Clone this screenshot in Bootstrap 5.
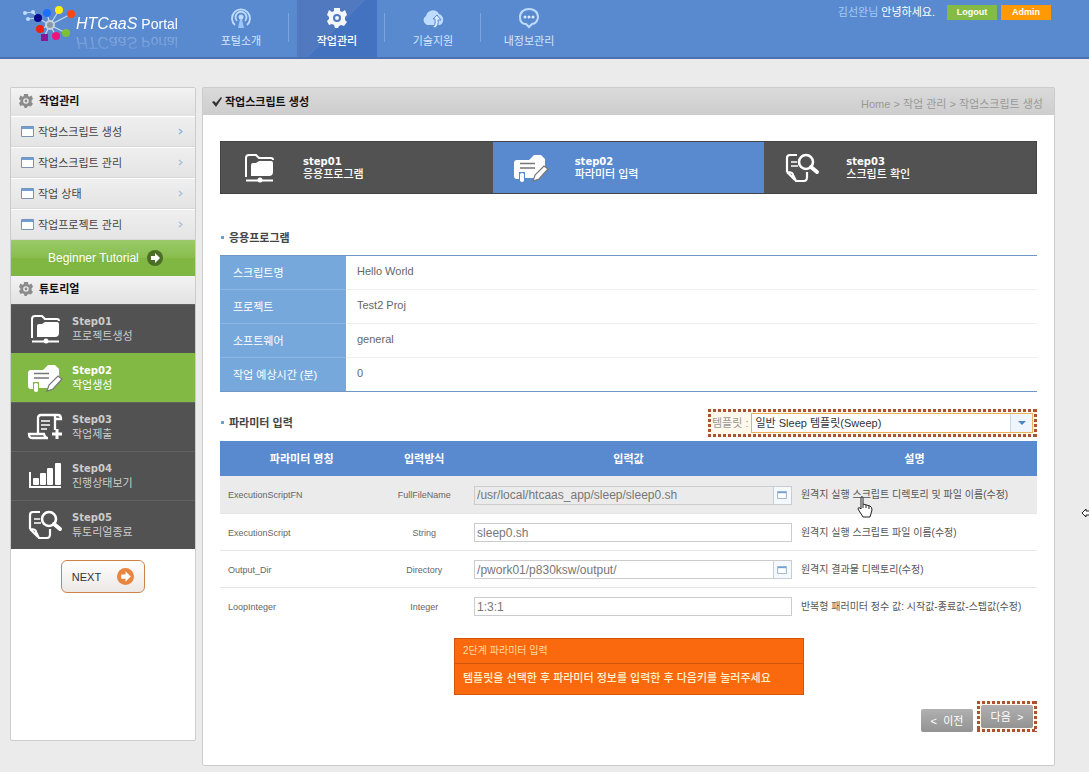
<!DOCTYPE html>
<html lang="ko">
<head>
<meta charset="utf-8">
<meta name="viewport" content="width=device-width, initial-scale=1">
<title>HTCaaS Portal</title>
<link href="https://cdn.jsdelivr.net/npm/bootstrap@5.3.0/dist/css/bootstrap.min.css" rel="stylesheet">
<style>
body{background:#ebebeb;font-family:"Liberation Sans","Noto Sans CJK KR",sans-serif;font-size:11px;line-height:16px;color:#666}
a{text-decoration:none;color:inherit}
.topbar{background:#598acf;border-bottom:2px solid #4a70b0;height:59px}
.brand{width:201px;padding-left:22px;color:#fff}
.brand-text{font-size:14px;line-height:18px;margin-top:15px;-webkit-box-reflect:below 0 linear-gradient(rgba(255,255,255,.1),rgba(255,255,255,.3))}
.brand-text i{font-size:16px;margin-right:4px}
.gnb-link{width:80px;height:57px;padding-top:7px;color:#d3e6fb;line-height:16px}
.gnb-link.active{background:linear-gradient(135deg,#5079c0 50%,#4372c0 50%);color:#fff;font-weight:500}
.gnb-sep{width:1px;height:29px;margin:13px 8px 0 7px;background:#7ba5df}
.user-area{padding:4px 38px 0 0}
.btn-mini{font-size:9px;line-height:15px;font-weight:700;color:#fff;width:50px;padding:0;border:0;border-radius:0}
.bg-leaf{background:#83bb45}
.bg-amber{background:#ff9a05}
.user-name{color:#a4ccf8}
.stage{padding:28px 34px 6px 10px;gap:6px}
.side{width:186px;margin-bottom:25px}
.sheet{background:#fff;border:1px solid #ccc;border-radius:2px}
.side-head{height:28px;padding:0 0 3px 8px;gap:6px;color:#111;font-weight:700;background:linear-gradient(#f3f3f3,#e2e2e2)}
.side-item{height:31px;padding:0 12px 0 10px;gap:4px;color:#444;background:linear-gradient(#efefef,#e4e4e4);border-top:1px solid #fff;border-bottom:1px solid #d9d9d9}
.tutorial{height:36px;padding-left:37px;gap:8px;font-size:12px;color:#fff;background:linear-gradient(#9aca69,#88bd4d 50%,#80b642 50%)}
.side-step{height:49px;padding-left:16px;gap:9px;color:#ccc;background:#525252;border-top:1px solid #616161;line-height:15px}
.side-step.active{background:#81b944;color:#fff;border-color:#81b944}
.step-name{font-family:"DejaVu Sans","Noto Sans CJK KR",sans-serif;font-size:10px;font-weight:700}
.btn-next{width:84px;height:33px;margin:11px auto 0;gap:16px;font-size:11px;color:#333;border:1px solid #cf8248;border-radius:6px;background:linear-gradient(#fff,#ece8e6)}
.title-bar{height:27px;padding:0 11px 0 9px;gap:3px;background:linear-gradient(#dadada,#cdcdcd)}
.title-bar h1{font-size:11px;line-height:16px;font-weight:700;color:#111}
.title-bar .crumbs{color:#999}
.sheet-body{padding:26px 17px 33px}
.wizard{background:#525252;border:1px solid #444;height:53px;color:#fff;margin-bottom:34px}
.wizard-step{flex:1 1 0;padding-left:20px;gap:20px;line-height:13px;font-weight:500}
.wizard-step.active{background:#598acf}
.step-icon{width:36px;height:30px}
.wizard .step-icon{margin-right:6px}
.sub-title{font-size:11px;line-height:20px;font-weight:700;color:#444}
.sub-title::before{content:"";display:inline-block;width:3px;height:3px;margin:0 5px 3px 1px;background:#6a9fce}
.info-table{border-top:1px solid #6f97c6;border-bottom:1px solid #6f97c6;margin:7px 0 17px}
.info-table th{width:126px;padding:0 0 0 13px;background:#77a8dc;color:#fff;font-weight:400;border-bottom:1px solid #8cb6e4}
.info-table td{height:34px;padding:0 0 4px 11px;border-bottom:1px solid #eee}
.info-table tr:last-child>*{border-bottom-color:#6f97c6}
.dash-frame{padding:4px;background:
 repeating-linear-gradient(90deg,#ac5230 0 3px,transparent 3px 5px) 0 0/100% 3px no-repeat,
 repeating-linear-gradient(90deg,#ac5230 0 3px,transparent 3px 5px) 0 100%/100% 3px no-repeat,
 repeating-linear-gradient(#ac5230 0 3px,transparent 3px 5px) 0 0/3px 100% no-repeat,
 repeating-linear-gradient(#ac5230 0 3px,transparent 3px 5px) 100% 0/3px 100% no-repeat #fff8ec}
.template{width:329px;color:#999;gap:3px}
.picker{border:1px solid #e8b35c;background:#fff;height:20px}
.picker select{appearance:none;border:0;outline:0;background:transparent;color:#333;padding:0 3px;min-width:0}
.picker-arrow{width:22px;border-left:1px solid #c9d8ea;background:#eef5fd;pointer-events:none}
.param-table{margin:4px 0 14px;table-layout:fixed}
.param-table th{height:35px;padding:0;background:#598acf;color:#fff;font-weight:700;text-align:center}
.param-table td{height:37px;padding:2px 0 0;border-bottom:1px solid #e6e6e6}
.param-table tr.hovered td{background:#ebebeb}
.param-table tbody tr:last-child td{border-bottom:0}
.param-table td.latin{font-size:9px}
.param-table td.desc{font-size:10px;padding-left:9px;color:#555}
.field{height:19px;margin:0 0 0 9px;border:1px solid #ccc;background:#fff}
.field input{border:0;outline:0;background:transparent;color:#777;padding:0 2px;min-width:0;font-size:12px;line-height:16px}
.hovered .field{background:transparent}
.field-btn{width:18px;padding:0;border:0;border-left:1px solid #ccc;background:#f4f9ff}
.note{width:350px;margin:0 0 6px 234px;background:#fa690d;border:1px solid #d2560a;color:#fff}
.note-head{padding:4px 8px;font-size:10px;color:#ffd9a0;border-bottom:1px solid #cf560c}
.note-body{padding:6px 8px 7px;line-height:17px;font-weight:500;color:#fff3cf}
.btn-gray{width:52px;height:23px;padding:0;font-size:11px;line-height:16px;color:#fff;border:0;border-radius:2px;background:linear-gradient(#b0b0b0,#939393)}
.pointer-hand{left:64px;top:20px}
.pointer-edge{right:0;top:449px}
</style>
</head>
<body>
<svg width="0" height="0" class="d-block" aria-hidden="true">
 <symbol id="i-folder" viewBox="0 0 36 30">
  <path d="M5 24V5q0-3 3-3h7l3 3h12q2 0 2 2" fill="none" stroke="#fff" stroke-width="2"/>
  <path d="M10 12q0-2 2-2h3l3-2h12q2 0 2 2v9q0 4-4 4H10z" fill="#fff"/>
  <path d="M5 27.500h27" stroke="#fff" stroke-width="2"/><circle cx="19" cy="27" r="2.500" fill="#fff"/>
 </symbol>
 <symbol id="i-edit" viewBox="0 0 36 30">
  <path d="M4 7h12l5-5h7l4 4v8l-9 11H12V19H6v7H4q-3 0-3-3V10q0-3 3-3z" fill="#fff"/>
  <path d="M7 10.500h15M7 15h15" stroke="#777" stroke-width="1.300"/>
  <path d="M7 21q2-2 4 0v7q-2 2-4 0z" fill="#fff"/>
  <path d="M20 28l2-6 9-9 4 3-9 10z" fill="#fff" stroke="#777" stroke-width="1.200"/>
 </symbol>
 <symbol id="i-submit" viewBox="0 0 36 30">
  <path d="M11 21V6q0-3 3-3h17q3 0 3 4h-6V4M28 7v11M2 22h15q1 4 4 4H5q-3 0-3-4z" fill="none" stroke="#fff" stroke-width="2.300"/>
  <path d="M14 9h9M14 13h9M14 17h6" stroke="#fff" stroke-width="1.500"/>
  <path d="M30 17v10M25 22h10" stroke="#fff" stroke-width="3"/>
 </symbol>
 <symbol id="i-chart" viewBox="0 0 36 30">
  <path d="M3 11v15h31" fill="none" stroke="#fff" stroke-width="2"/>
  <rect x="6" y="17" width="6" height="7" rx="1" fill="#fff"/><rect x="13" y="12" width="6" height="12" rx="1" fill="#fff"/><rect x="20" y="7" width="6" height="17" rx="1" fill="#fff"/><rect x="28" y="2" width="6" height="22" rx="1" fill="#fff"/>
 </symbol>
 <symbol id="i-search" viewBox="0 0 36 30">
  <path d="M13 2H6Q3 2 3 5v14M3 19q6 0 6 3l3 6h8q3 0 3-4v-5M3 19l8 8" fill="none" stroke="#fff" stroke-width="2.200"/>
  <path d="M7 9h6M7 13h7" stroke="#fff" stroke-width="1.500"/>
  <circle cx="22" cy="9" r="7" fill="none" stroke="#fff" stroke-width="2.600"/>
  <path d="M27 14l6 5" stroke="#fff" stroke-width="4" stroke-linecap="round"/>
 </symbol>
 <symbol id="i-gear" viewBox="0 0 20 20">
  <path fill-rule="evenodd" d="M7 0h6v3l2 1 3-2 2 5-2 2v3l2 2-3 4-3-1-2 1-1 2H8l-1-3-2-1-3 1-2-4 2-2V9L0 7l2-5 3 2 2-1zM10 6a4 4 0 1 0 0 8 4 4 0 0 0 0-8zM10 8a2 2 0 1 1 0 4 2 2 0 0 1 0-4z"/>
 </symbol>
 <symbol id="i-window" viewBox="0 0 13 11">
  <path d="M.5.5h12v10H.5z" fill="#fff" stroke="#7793b5"/><path d="M1 1h11v2H1z" fill="#6f9fd6"/>
 </symbol>
 <symbol id="i-go" viewBox="0 0 16 16">
  <circle cx="8" cy="8" r="8"/><path d="M4 6h4V3l5 5-5 5v-3H4z" fill="#fff"/>
 </symbol>
</svg>

<header class="topbar d-flex align-items-start">
 <a href="#" class="brand d-flex align-items-start">
  <svg width="54" height="42" viewBox="0 0 54 42" class="flex-shrink-0">
   <path d="M28 25L16 18M28 25L25 13M28 25L37 10M28 25L49 14M28 25L18 29M28 25L22 37M28 25L34 36M28 25L44 33M16 18L11 12M16 18L6 19M11 12L3 13" stroke="#c9d9ee" stroke-width="1.200"/>
   <circle cx="28" cy="25" r="4" fill="#89a" stroke="#c8d0da" stroke-width="2"/>
   <g fill="#bcdcff"><circle cx="3" cy="13" r="2"/><circle cx="11" cy="12" r="2"/><circle cx="6" cy="19" r="2"/></g>
   <circle cx="16" cy="18" r="4" fill="#0a0a8c"/><circle cx="25" cy="13" r="4" fill="#1f6fff"/><circle cx="37" cy="10" r="4" fill="#ffee10"/><circle cx="49" cy="14" r="4" fill="#ff4612"/><circle cx="18" cy="29" r="4" fill="#f2200f"/><path d="M19 34h7v7h-7z" fill="#8d1796"/><circle cx="34" cy="36" r="4" fill="#ee1378"/><circle cx="44" cy="33" r="4" fill="#7fbf3c"/>
  </svg>
  <span class="brand-text text-nowrap"><i>HTCaaS</i>Portal</span>
 </a>
 <nav class="d-flex text-center" aria-label="주 메뉴">
  <a href="#" class="gnb-link">
   <svg class="d-block mx-auto mb-1" width="22" height="22" viewBox="0 0 22 22"><g fill="none" stroke="#bedcff" stroke-width="1.800"><path d="M5 18a9 9 0 1 1 12 0M7 14a5.500 5.500 0 1 1 8 0"/></g><circle cx="11" cy="10" r="2.500" fill="#bedcff"/><path d="M10 12h2l2 9H8z" fill="#9cc6f5"/></svg>포털소개</a>
  <span class="gnb-sep"></span>
  <a href="#" class="gnb-link active" aria-current="page"><svg class="d-block mx-auto mb-1" width="20" height="22" viewBox="0 0 20 22" fill="#f3f6fb"><use href="#i-gear" y="1" width="20" height="20"/></svg>작업관리</a>
  <span class="gnb-sep"></span>
  <a href="#" class="gnb-link"><svg class="d-block mx-auto mb-1" width="22" height="22" viewBox="0 0 22 22"><path d="M5 18a5 5 0 0 1-1-9 7 7 0 0 1 13-2 6 6 0 0 1 1 11z" fill="#bedcff"/><path d="M10 20q4-1 3-8h-2l4-4 4 5h-3q1 6-3 8z" fill="#d7eaff" stroke="#598acf"/></svg>기술지원</a>
  <span class="gnb-sep"></span>
  <a href="#" class="gnb-link"><svg class="d-block mx-auto mb-1" width="22" height="22" viewBox="0 0 22 22"><path d="M11 2c5 0 9 3 9 8 0 4-3 7-6 7l-3 3-3-3c-4 0-6-3-6-7 0-5 4-8 9-8z" fill="none" stroke="#bedcff" stroke-width="2"/><g fill="#d7eaff"><circle cx="7" cy="10" r="1.500"/><circle cx="11" cy="10" r="1.500"/><circle cx="15" cy="10" r="1.500"/></g></svg>내정보관리</a>
 </nav>
 <div class="user-area d-flex ms-auto align-items-center">
  <span class="me-2 pe-1 text-white text-nowrap"><span class="user-name">김선완님</span> 안녕하세요.</span>
  <button type="button" class="btn btn-mini bg-leaf me-1">Logout</button>
  <button type="button" class="btn btn-mini bg-amber">Admin</button>
 </div>
</header>

<div class="stage position-relative d-flex">
 <aside class="side sheet flex-shrink-0">
  <div class="side-head d-flex align-items-center"><svg width="14" height="14" fill="#8b8b8b"><use href="#i-gear"/></svg>작업관리</div>
  <a href="#" class="side-item d-flex align-items-center"><svg width="13" height="11"><use href="#i-window"/></svg>작업스크립트 생성<svg class="ms-auto" width="5" height="7"><path d="M1 1l3 2.500L1 6" fill="none" stroke="#8bb3da" stroke-width="1.300"/></svg></a>
  <a href="#" class="side-item d-flex align-items-center"><svg width="13" height="11"><use href="#i-window"/></svg>작업스크립트 관리<svg class="ms-auto" width="5" height="7"><path d="M1 1l3 2.500L1 6" fill="none" stroke="#a9bfd6" stroke-width="1.300"/></svg></a>
  <a href="#" class="side-item d-flex align-items-center"><svg width="13" height="11"><use href="#i-window"/></svg>작업 상태<svg class="ms-auto" width="5" height="7"><path d="M1 1l3 2.500L1 6" fill="none" stroke="#a9bfd6" stroke-width="1.300"/></svg></a>
  <a href="#" class="side-item d-flex align-items-center"><svg width="13" height="11"><use href="#i-window"/></svg>작업프로젝트 관리<svg class="ms-auto" width="5" height="7"><path d="M1 1l3 2.500L1 6" fill="none" stroke="#a9bfd6" stroke-width="1.300"/></svg></a>
  <a href="#" class="tutorial d-flex align-items-center">Beginner Tutorial<svg width="16" height="16" fill="#4b6e27"><use href="#i-go"/></svg></a>
  <div class="side-head d-flex align-items-center"><svg width="14" height="14" fill="#8b8b8b"><use href="#i-gear"/></svg>튜토리얼</div>
  <a href="#" class="side-step d-flex align-items-center"><svg class="step-icon"><use href="#i-folder"/></svg><span><span class="step-name d-block">Step01</span>프로젝트생성</span></a>
  <a href="#" class="side-step active d-flex align-items-center"><svg class="step-icon"><use href="#i-edit"/></svg><span><span class="step-name d-block">Step02</span>작업생성</span></a>
  <a href="#" class="side-step d-flex align-items-center"><svg class="step-icon"><use href="#i-submit"/></svg><span><span class="step-name d-block">Step03</span>작업제출</span></a>
  <a href="#" class="side-step d-flex align-items-center"><svg class="step-icon"><use href="#i-chart"/></svg><span><span class="step-name d-block">Step04</span>진행상태보기</span></a>
  <a href="#" class="side-step d-flex align-items-center"><svg class="step-icon"><use href="#i-search"/></svg><span><span class="step-name d-block">Step05</span>튜토리얼종료</span></a>
  <button type="button" class="btn-next d-flex align-items-center justify-content-center">NEXT<svg width="17" height="17" viewBox="0 0 16 16" fill="#e8853f"><use href="#i-go" width="16" height="16"/></svg></button>
 </aside>

 <main class="sheet flex-grow-1">
  <div class="title-bar d-flex align-items-center">
   <svg width="10" height="10"><path d="M0 5l2-1 2 2 5-6 1 1-6 9z" fill="#333"/></svg>
   <h1 class="m-0">작업스크립트 생성</h1>
   <nav class="crumbs ms-auto mt-1" aria-label="현재 위치"><a href="#">Home</a> &gt; <a href="#">작업 관리</a> &gt; 작업스크립트 생성</nav>
  </div>
  <div class="sheet-body">
   <div class="wizard d-flex">
    <div class="wizard-step d-flex align-items-center"><svg class="step-icon"><use href="#i-folder"/></svg><span><span class="step-name d-block">step01</span>응용프로그램</span></div>
    <div class="wizard-step active d-flex align-items-center"><svg class="step-icon"><use href="#i-edit"/></svg><span><span class="step-name d-block">step02</span>파라미터 입력</span></div>
    <div class="wizard-step d-flex align-items-center"><svg class="step-icon"><use href="#i-search"/></svg><span><span class="step-name d-block">step03</span>스크립트 확인</span></div>
   </div>

   <h2 class="sub-title m-0">응용프로그램</h2>
   <table class="info-table w-100">
    <tr><th scope="row">스크립트명</th><td>Hello World</td></tr>
    <tr><th scope="row">프로젝트</th><td>Test2 Proj</td></tr>
    <tr><th scope="row">소프트웨어</th><td>general</td></tr>
    <tr><th scope="row">작업 예상시간 (분)</th><td>0</td></tr>
   </table>

   <div class="d-flex justify-content-between align-items-center">
    <h2 class="sub-title m-0">파라미터 입력</h2>
    <div class="template dash-frame d-flex align-items-center">
     <label for="template" class="text-nowrap">템플릿 :</label>
     <div class="picker d-flex flex-grow-1">
      <select id="template" class="flex-grow-1"><option>일반 Sleep 템플릿(Sweep)</option></select>
      <span class="picker-arrow d-flex align-items-center justify-content-center"><svg width="8" height="4"><path d="M0 0h8L4 4z" fill="#4b86c9"/></svg></span>
     </div>
    </div>
   </div>

   <table class="param-table w-100">
    <colgroup><col style="width:20%"><col style="width:10%"><col style="width:40%"><col style="width:30%"></colgroup>
    <thead><tr><th scope="col">파라미터 명칭</th><th scope="col">입력방식</th><th scope="col">입력값</th><th scope="col">설명</th></tr></thead>
    <tbody>
     <tr class="hovered"><td class="latin ps-2">ExecutionScriptFN</td><td class="latin text-center">FullFileName</td>
      <td><div class="field d-flex"><input class="flex-grow-1" type="text" aria-label="ExecutionScriptFN" value="/usr/local/htcaas_app/sleep/sleep0.sh"><button type="button" class="field-btn d-flex align-items-center justify-content-center" aria-label="찾아보기"><svg width="10" height="8"><use href="#i-window"/></svg></button></div></td>
      <td class="desc text-nowrap position-relative">원격지 실행 스크립트 디렉토리 및 파일 이름(수정)
       <svg class="pointer-hand position-absolute" width="17" height="22" viewBox="0 0 17 22"><path d="M5 1q2-1 2 1v6l7 2q2 1 2 4l-2 7H7l-5-8q0-2 2-1l1 1z" fill="#fff" stroke="#222"/><path d="M7 8v4M10 9v3M13 10v3" stroke="#222"/></svg></td></tr>
     <tr><td class="latin ps-2">ExecutionScript</td><td class="latin text-center">String</td>
      <td><div class="field d-flex"><input class="flex-grow-1" type="text" aria-label="ExecutionScript" value="sleep0.sh"></div></td>
      <td class="desc text-nowrap">원격지 실행 스크립트 파일 이름(수정)</td></tr>
     <tr><td class="latin ps-2">Output_Dir</td><td class="latin text-center">Directory</td>
      <td><div class="field d-flex"><input class="flex-grow-1" type="text" aria-label="Output_Dir" value="/pwork01/p830ksw/output/"><button type="button" class="field-btn d-flex align-items-center justify-content-center" aria-label="찾아보기"><svg width="10" height="8"><use href="#i-window"/></svg></button></div></td>
      <td class="desc text-nowrap">원격지 결과물 디렉토리(수정)</td></tr>
     <tr><td class="latin ps-2">LoopInteger</td><td class="latin text-center">Integer</td>
      <td><div class="field d-flex"><input class="flex-grow-1" type="text" aria-label="LoopInteger" value="1:3:1"></div></td>
      <td class="desc text-nowrap">반복형 패러미터 정수 값: 시작값-종료값-스텝값(수정)</td></tr>
    </tbody>
   </table>

   <div class="note">
    <div class="note-head">2단계 파라미터 입력</div>
    <div class="note-body">템플릿을 선택한 후 파라미터 정보를 입력한 후 다음키를 눌러주세요</div>
   </div>
   <div class="d-flex justify-content-end align-items-end gap-1">
    <button type="button" class="btn-gray">&lt;&nbsp; 이전</button>
    <div class="dash-frame"><button type="button" class="btn-gray d-block">다음 &nbsp;&gt;</button></div>
   </div>
  </div>
 </main>
 <svg class="pointer-edge position-absolute" width="8" height="10" viewBox="0 0 8 10"><path d="M8 3H5V1L1 5l4 4V7h3" fill="#fff" stroke="#222"/></svg>
</div>
<script src="https://cdn.jsdelivr.net/npm/bootstrap@5.3.0/dist/js/bootstrap.bundle.min.js"></script>
</body>
</html>
